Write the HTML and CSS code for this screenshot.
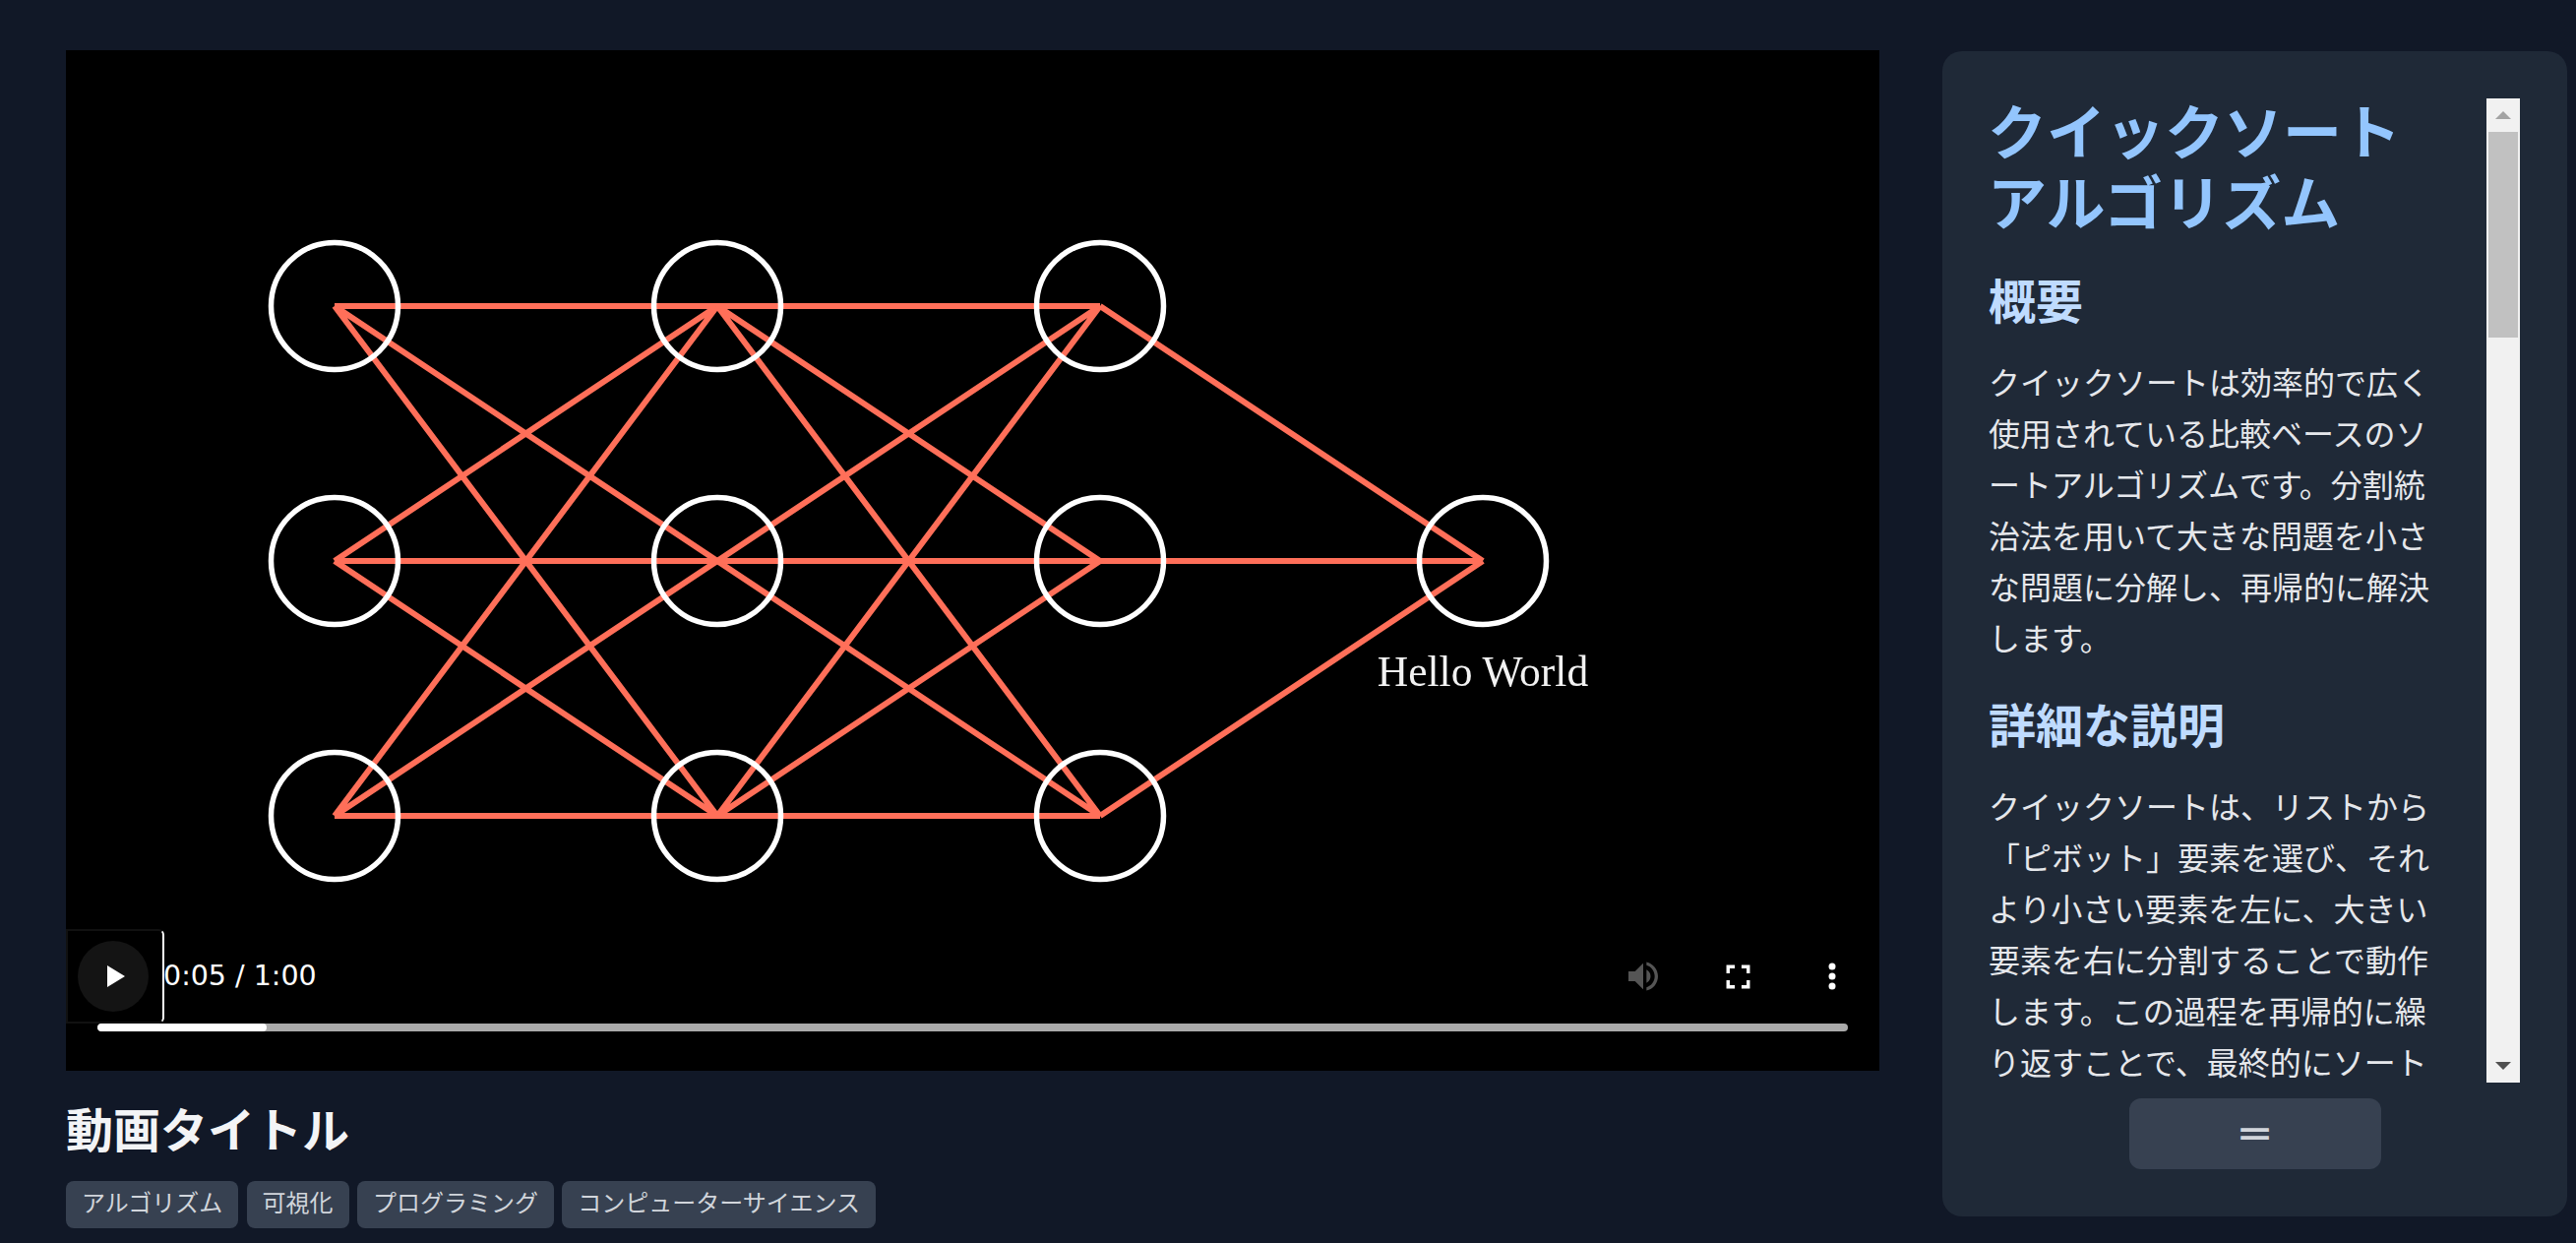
FILE: index.html
```html
<!DOCTYPE html>
<html lang="ja">
<head>
<meta charset="utf-8">
<title>クイックソートアルゴリズム</title>
<link rel="stylesheet" href="styles.css">
</head>
<body>
<main class="layout">
  <section class="main-col">
    <div class="video">
      <svg class="scene" viewBox="0 0 1843 1037" aria-hidden="false">
        <g class="edges">
          <path d="M273 260L662 260M273 260L662 519M273 260L662 778M273 519L662 260M273 519L662 519M273 519L662 778M273 778L662 260M273 778L662 519M273 778L662 778"/>
          <path d="M662 260L1051 260M662 260L1051 519M662 260L1051 778M662 519L1051 260M662 519L1051 519M662 519L1051 778M662 778L1051 260M662 778L1051 519M662 778L1051 778"/>
          <path d="M1051 260L1440 519M1051 519L1440 519M1051 778L1440 519"/>
        </g>
        <g class="nodes">
          <circle cx="273" cy="260" r="64.5"/><circle cx="273" cy="519" r="64.5"/><circle cx="273" cy="778" r="64.5"/>
          <circle cx="662" cy="260" r="64.5"/><circle cx="662" cy="519" r="64.5"/><circle cx="662" cy="778" r="64.5"/>
          <circle cx="1051" cy="260" r="64.5"/><circle cx="1051" cy="519" r="64.5"/><circle cx="1051" cy="778" r="64.5"/>
          <circle cx="1440" cy="519" r="64.5"/>
        </g>
        <text class="scene-label" x="1440" y="646">Hello World</text>
      </svg>
      <div class="controls">
        <div class="control-row">
          <button class="play" type="button" aria-label="再生">
            <span class="play-disc">
              <svg class="play-icon" viewBox="0 0 18 22"><path d="M0 0L18 11L0 22Z"/></svg>
            </span>
          </button>
          <span class="time">0:05 / 1:00</span>
          <span class="spacer"></span>
          <button class="ctl ctl-muted" type="button" aria-label="音量">
            <svg class="icon-volume" viewBox="0 0 24 24"><path d="M3 9v6h4l5 5V4L7 9H3zm13.5 3c0-1.77-1.02-3.29-2.5-4.03v8.05c1.48-.73 2.5-2.25 2.5-4.02zM14 3.23v2.06c2.89.86 5 3.54 5 6.71s-2.11 5.85-5 6.71v2.06c4.01-.91 7-4.49 7-8.77s-2.99-7.86-7-8.77z"/></svg>
          </button>
          <button class="ctl" type="button" aria-label="全画面">
            <svg class="icon-full" viewBox="0 0 24 24"><path d="M7 14H5v5h5v-2H7v-3zm-2-4h2V7h3V5H5v5zm12 7h-3v2h5v-5h-2v3zM14 5v2h3v3h2V5h-5z"/></svg>
          </button>
          <button class="ctl" type="button" aria-label="その他">
            <svg class="icon-more" viewBox="0 0 8 28"><circle cx="4" cy="4" r="3.5"/><circle cx="4" cy="14" r="3.5"/><circle cx="4" cy="24" r="3.5"/></svg>
          </button>
        </div>
        <div class="track"><div class="track-fill"></div></div>
      </div>
    </div>
    <h1 class="video-title">動画タイトル</h1>
    <ul class="tags">
      <li class="tag">アルゴリズム</li>
      <li class="tag">可視化</li>
      <li class="tag">プログラミング</li>
      <li class="tag">コンピューターサイエンス</li>
    </ul>
  </section>
  <aside class="panel">
    <div class="scroll-wrap">
      <article class="article">
        <h2 class="article-title">クイックソートアルゴリズム</h2>
        <h3 class="article-head">概要</h3>
        <p class="article-text">クイックソートは効率的で広く使用されている比較ベースのソートアルゴリズムです。分割統治法を用いて大きな問題を小さな問題に分解し、再帰的に解決します。</p>
        <h3 class="article-head">詳細な説明</h3>
        <p class="article-text">クイックソートは、リストから「ピボット」要素を選び、それより小さい要素を左に、大きい要素を右に分割することで動作します。この過程を再帰的に繰り返すことで、最終的にソート</p>
      </article>
      <div class="scrollbar">
        <div class="sb-btn"><span class="tri-up"></span></div>
        <div class="sb-thumb"></div>
        <div class="sb-space"></div>
        <div class="sb-btn"><span class="tri-down"></span></div>
      </div>
    </div>
    <button class="toggle" type="button">═</button>
  </aside>
</main>
</body>
</html>
```

FILE: styles.css
```css
* { box-sizing: border-box; }
html, body { height: 100%; }
body {
  margin: 0;
  background: #111827;
  color: #f3f4f6;
  font-family: "Noto Sans CJK JP", "Noto Sans", sans-serif;
  overflow: hidden;
}
button { font: inherit; color: inherit; border: 0; background: none; padding: 0; }
.layout {
  display: flex;
  gap: 64px;
  padding: 51px 9px 0 67px;
  align-items: flex-start;
}
.main-col { width: 1843px; flex: none; }
.video {
  position: relative;
  width: 1843px;
  height: 1037px;
  background: #000;
  overflow: hidden;
}
.scene { display: block; width: 100%; height: 100%; filter: blur(0.5px); }
.edges path { fill: none; stroke: #ff6f59; stroke-width: 6; stroke-linejoin: round; }
.nodes circle { fill: none; stroke: #fff; stroke-width: 5.5; }
.scene-label {
  fill: #f2f2f2;
  font-family: "Liberation Serif", serif;
  font-size: 43.5px;
  text-anchor: middle;
}
.controls {
  position: absolute;
  left: 0;
  right: 0;
  bottom: 40px;
  color: #fff;
}
.control-row { display: flex; align-items: center; height: 96px; }
.play {
  width: 100px;
  height: 96px;
  flex: none;
  display: flex;
  align-items: center;
  justify-content: flex-start;
  padding-left: 10px;
  border: 2px solid #111;
  border-right: 2px solid #fff;
  border-radius: 0 6px 6px 0;
}
.play-disc {
  width: 72px;
  height: 72px;
  border-radius: 50%;
  background: #141414;
  display: flex;
  align-items: center;
  justify-content: center;
  padding-left: 5px;
}
.play-icon { width: 18px; height: 22px; fill: #fff; display: block; }
.time {
  font-family: "DejaVu Sans", sans-serif;
  font-size: 28.5px;
  color: #fff;
  white-space: nowrap;
  margin-left: -1px;
  margin-top: -2px;
}
.spacer { flex: 1; }
.ctl {
  width: 96px;
  height: 96px;
  flex: none;
  display: flex;
  align-items: center;
  justify-content: center;
}
.ctl svg { display: block; fill: #fff; }
.ctl-muted svg { fill: #555; }
.icon-volume { width: 40px; height: 40px; }
.icon-full { width: 41px; height: 41px; }
.icon-more { width: 8px; height: 28px; }
.track {
  margin: 0 32px;
  height: 8px;
  background: #aaa;
  border-radius: 4px;
  overflow: hidden;
}
.track-fill { width: 172px; height: 100%; background: #fff; border-radius: 4px; }
.video-title {
  margin: 25px 0 0;
  font-size: 48px;
  line-height: 64px;
  font-weight: 700;
  color: #f3f4f6;
}
.tags {
  list-style: none;
  margin: 23px 0 0;
  padding: 0;
  display: flex;
  gap: 8.33px;
}
.tag {
  height: 48px;
  padding: 0 16px;
  border-radius: 8px;
  background: #374151;
  color: #d1d5db;
  font-size: 24px;
  line-height: 42px;
  white-space: nowrap;
}
.panel {
  width: 635px;
  height: 1184px;
  flex: none;
  margin-top: 1px;
  padding: 48px;
  background: #1f2937;
  border-radius: 20px;
  display: flex;
  flex-direction: column;
  align-items: center;
  gap: 16px;
}
.scroll-wrap { display: flex; width: 100%; height: 1000px; flex: none; }
.article { flex: 1; min-width: 0; overflow: hidden; margin: -25px 0 0 -2px; padding: 20px 50px 0 1px; }
.article-title {
  margin: 0 0 32px -1px;
  font-size: 60px;
  line-height: 72px;
  font-weight: 700;
  color: #93c5fd;
}
.article-head {
  margin: 0 0 26px;
  font-size: 48px;
  line-height: 64px;
  font-weight: 700;
  color: #bfdbfe;
}
.article-text {
  margin: 0 0 29px;
  font-size: 32px;
  line-height: 52px;
  color: #e5e7eb;
}
.scrollbar {
  width: 34px;
  flex: none;
  background: #f1f1f1;
  display: flex;
  flex-direction: column;
  align-items: center;
}
.sb-btn { height: 34px; flex: none; width: 100%; display: flex; align-items: center; justify-content: center; }
.sb-thumb { width: 30px; height: 209px; flex: none; background: #c1c1c1; }
.sb-space { flex: 1; }
.tri-up { width: 0; height: 0; border-left: 8px solid transparent; border-right: 8px solid transparent; border-bottom: 8px solid #a3a3a3; }
.tri-down { width: 0; height: 0; border-left: 8px solid transparent; border-right: 8px solid transparent; border-top: 8px solid #505050; }
.toggle {
  width: 256px;
  height: 72px;
  flex: none;
  border-radius: 12px;
  background: #374151;
  color: #d1d5db;
  font-family: "DejaVu Sans", sans-serif;
  font-size: 46px;
  line-height: 72px;
  text-align: center;
}
```
